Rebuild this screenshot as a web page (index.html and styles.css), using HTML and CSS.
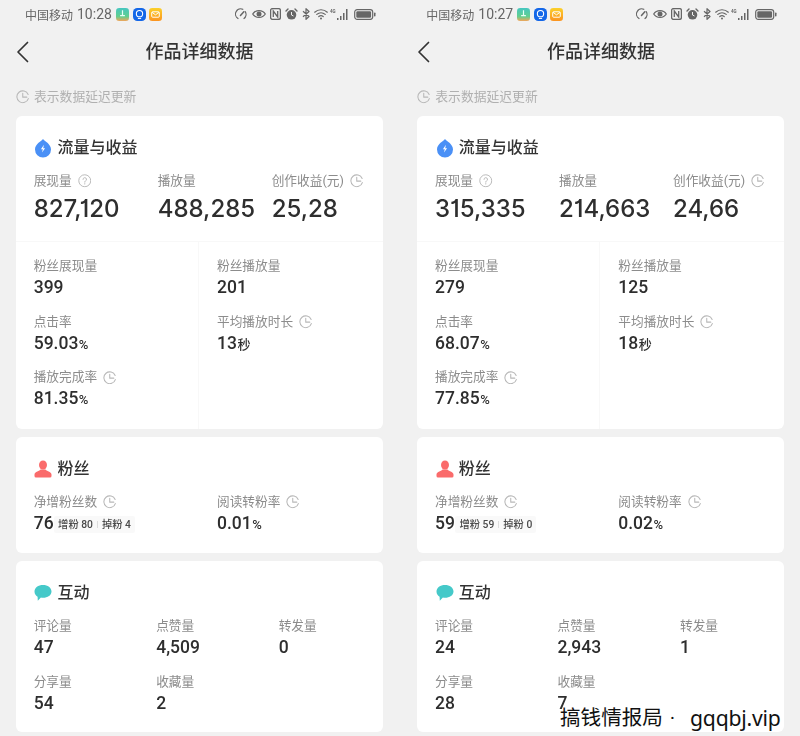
FILE: index.html
```html
<!DOCTYPE html>
<html lang="zh-CN">
<head>
<meta charset="utf-8">
<title>作品详细数据</title>
<link rel="stylesheet" href="styles.css">
</head>
<body>
<svg class="defs" width="0" height="0" aria-hidden="true">
  <defs>
    <linearGradient id="g-app" x1="0" y1="0" x2="0" y2="1"><stop offset="0" stop-color="#45c6c0"/><stop offset=".65" stop-color="#62cf8f"/><stop offset="1" stop-color="#f3a55a"/></linearGradient>
    <linearGradient id="g-mail" x1="0" y1="0" x2="0" y2="1"><stop offset="0" stop-color="#fbd02a"/><stop offset="1" stop-color="#fb9420"/></linearGradient>
  </defs>
  <symbol id="i-clock" viewBox="0 0 14 14"><path d="M12.600 4.600A6.100 6.100 0 1 0 12.800 8.900" fill="none" stroke="currentColor" stroke-width="1.100" stroke-linecap="round"/><path d="M7 3.400V7.400H11.200" fill="none" stroke="currentColor" stroke-width="1.100" stroke-linecap="round" stroke-linejoin="round"/></symbol>
  <symbol id="i-help" viewBox="0 0 14 14"><circle cx="7" cy="7" r="6.200" fill="none" stroke="currentColor" stroke-width="1"/><path d="M5.200 5.600A1.800 1.800 0 1 1 7.600 7.300C7.100 7.600 7 7.900 7 8.500" fill="none" stroke="currentColor" stroke-width="1" stroke-linecap="round"/><circle cx="7" cy="10.200" r=".7" fill="currentColor"/></symbol>
  <symbol id="i-drop" viewBox="0 0 18 20"><path d="M9 1C11 3.400 17 6 17 11.500A8 8 0 0 1 1 11.500C1 6 7 3.400 9 1Z" fill="#4a90f6"/><path d="M9.900 6.800L6.900 11.200H8.800L8 14.600L11.100 10.200H9.200Z" fill="#fff"/></symbol>
  <symbol id="i-person" viewBox="0 0 18 18"><ellipse cx="9" cy="5" rx="4" ry="4.500" fill="#fa6b6b"/><path d="M6.500 9.500H11.500C12 11.200 17.500 11.500 17.500 14.500V16A1.500 1.500 0 0 1 16 17.500H2A1.500 1.500 0 0 1 .5 16V14.500C.5 11.500 6 11.200 6.500 9.500Z" fill="#fa6b6b"/></symbol>
  <symbol id="i-chat" viewBox="0 0 18 17"><path d="M9 .5C13.700 .5 17.500 3.200 17.500 7C17.500 10.800 13.700 13.300 9 13.300C8.300 13.300 7.500 13.200 6.900 13.100L3.800 16.200L3.600 12.300C1.700 11.200 .5 9.300 .5 7C.5 3.200 4.300 .5 9 .5Z" fill="#45c9c9"/></symbol>
  <symbol id="s-green" viewBox="0 0 12 12"><rect width="12" height="12" rx="3" fill="url(#g-app)"/><path d="M6 2V7M3.800 7H8.200" stroke="#e8fff6" stroke-width="1.100"/></symbol>
  <symbol id="s-blue" viewBox="0 0 12 12"><rect width="12" height="12" rx="4" fill="#1467e8"/><circle cx="6" cy="5.200" r="2.900" fill="none" stroke="#fff" stroke-width="1"/><path d="M4.500 9.600H7.500" stroke="#fff" stroke-width="1"/></symbol>
  <symbol id="s-mail" viewBox="0 0 12 12"><rect width="12" height="12" rx="3" fill="url(#g-mail)"/><rect x="2.500" y="3.500" width="7" height="5" rx=".8" fill="none" stroke="#fff" stroke-width=".9"/><path d="M2.800 4L6 6.300L9.200 4" fill="none" stroke="#fff" stroke-width=".9"/></symbol>
  <symbol id="s-gauge" viewBox="0 0 12 12"><path d="M3 10.500A5.200 5.200 0 0 1 7.800 1.300M10.200 3.600A5.200 5.200 0 0 1 9 10.500" fill="none" stroke="currentColor" stroke-width="1.200" stroke-linecap="round"/><path d="M5.500 7.500L8.800 3.800" stroke="currentColor" stroke-width="1.500" stroke-linecap="round"/></symbol>
  <symbol id="s-eye" viewBox="0 0 14 10"><path d="M.7 5C3.500 .5 10.500 .5 13.300 5C10.500 9.500 3.500 9.500 .7 5Z" fill="none" stroke="currentColor" stroke-width="1.200"/><circle cx="7" cy="5" r="2.500" fill="currentColor"/></symbol>
  <symbol id="s-nfc" viewBox="0 0 11 12"><rect x=".6" y=".6" width="9.800" height="10.800" rx="1.800" fill="none" stroke="currentColor" stroke-width="1.300"/><path d="M3.300 9V3L7.700 9V3" fill="none" stroke="currentColor" stroke-width="1.300"/></symbol>
  <symbol id="s-alarm" viewBox="0 0 13 12"><circle cx="6.500" cy="6.800" r="4.800" fill="currentColor"/><path d="M1 3L3 1M12 3L10 1" stroke="currentColor" stroke-width="1.400" stroke-linecap="round"/><path d="M6.500 4V7L8.500 8" fill="none" stroke="#f1f1f1" stroke-width="1"/></symbol>
  <symbol id="s-bt" viewBox="0 0 8 12"><path d="M1 3.200L7 8.500L4 11.300V.7L7 3.500L1 8.800" fill="none" stroke="currentColor" stroke-width="1.200" stroke-linejoin="round"/></symbol>
  <symbol id="s-wifi" viewBox="0 0 14 12"><path d="M.7 4.200C4.200 .9 9.800 .9 13.300 4.200M2.800 6.400C5.200 4.300 8.800 4.300 11.200 6.400M4.800 8.500C6 7.500 8 7.500 9.200 8.500" fill="none" stroke="currentColor" stroke-width="1.200" stroke-linecap="round"/><circle cx="7" cy="10.500" r="1" fill="currentColor"/></symbol>
  <symbol id="s-signal" viewBox="0 0 19 12"><text x="0" y="4.500" class="tiny">4G</text><path d="M7 10H8.500V12H7ZM10 8H11.500V12H10ZM13 5H14.500V12H13ZM16 1H17.500V12H16Z" fill="currentColor"/></symbol>
  <symbol id="s-bat" viewBox="0 0 22 11"><rect x=".7" y=".7" width="18" height="9.600" rx="2.500" fill="none" stroke="currentColor" stroke-width="1.200"/><rect x="2.300" y="2.300" width="14.800" height="6.400" rx="1.200" fill="currentColor"/><rect x="20" y="3.500" width="1.500" height="4" rx=".7" fill="currentColor"/></symbol>
</svg>

<main class="phones">
  <section class="phone">
    <header class="status">
      <div class="status-left"><span class="carrier">中国移动</span><span class="time">10:28</span>
        <svg class="app"><use href="#s-green"/></svg><svg class="app"><use href="#s-blue"/></svg><svg class="app"><use href="#s-mail"/></svg></div>
      <div class="status-right">
        <svg class="sg"><use href="#s-gauge"/></svg><svg class="se"><use href="#s-eye"/></svg><svg class="sn"><use href="#s-nfc"/></svg><svg class="sa"><use href="#s-alarm"/></svg><svg class="sb"><use href="#s-bt"/></svg><svg class="sw"><use href="#s-wifi"/></svg><svg class="ss"><use href="#s-signal"/></svg><svg class="sc"><use href="#s-bat"/></svg>
      </div>
    </header>
    <nav class="nav">
      <svg class="back" viewBox="0 0 12 22"><path d="M11 1.500L1.500 11L11 20.500" fill="none" stroke="currentColor" stroke-width="1.700" stroke-linecap="round" stroke-linejoin="round"/></svg>
      <h1 class="nav-title">作品详细数据</h1>
    </nav>
    <p class="note"><svg class="ic"><use href="#i-clock"/></svg>表示数据延迟更新</p>

    <section class="card">
      <h2 class="card-title"><svg class="ti ti-drop"><use href="#i-drop"/></svg>流量与收益</h2>
      <div class="headline">
        <div><div class="label">展现量<svg class="ic"><use href="#i-help"/></svg></div><div class="big">827,120</div></div>
        <div><div class="label">播放量</div><div class="big">488,285</div></div>
        <div><div class="label">创作收益(元)<svg class="ic"><use href="#i-clock"/></svg></div><div class="big">25,28</div></div>
      </div>
      <div class="split">
        <div class="stack">
          <div><div class="label">粉丝展现量</div><div class="value">399</div></div>
          <div><div class="label">点击率</div><div class="value">59.03<small>%</small></div></div>
          <div><div class="label">播放完成率<svg class="ic"><use href="#i-clock"/></svg></div><div class="value">81.35<small>%</small></div></div>
        </div>
        <div class="stack">
          <div><div class="label">粉丝播放量</div><div class="value">201</div></div>
          <div><div class="label">平均播放时长<svg class="ic"><use href="#i-clock"/></svg></div><div class="value">13<small>秒</small></div></div>
        </div>
      </div>
    </section>

    <section class="card">
      <h2 class="card-title"><svg class="ti"><use href="#i-person"/></svg>粉丝</h2>
      <div class="two">
        <div><div class="label">净增粉丝数<svg class="ic"><use href="#i-clock"/></svg></div><div class="value">76<span class="chip"><span>增粉&nbsp;80</span><i></i><span>掉粉&nbsp;4</span></span></div></div>
        <div><div class="label">阅读转粉率<svg class="ic"><use href="#i-clock"/></svg></div><div class="value">0.01<small>%</small></div></div>
      </div>
    </section>

    <section class="card">
      <h2 class="card-title"><svg class="ti"><use href="#i-chat"/></svg>互动</h2>
      <div class="three">
        <div><div class="label">评论量</div><div class="value">47</div></div>
        <div><div class="label">点赞量</div><div class="value">4,509</div></div>
        <div><div class="label">转发量</div><div class="value">0</div></div>
        <div><div class="label">分享量</div><div class="value">54</div></div>
        <div><div class="label">收藏量</div><div class="value">2</div></div>
      </div>
    </section>
  </section>

  <section class="phone">
    <header class="status">
      <div class="status-left"><span class="carrier">中国移动</span><span class="time">10:27</span>
        <svg class="app"><use href="#s-green"/></svg><svg class="app"><use href="#s-blue"/></svg><svg class="app"><use href="#s-mail"/></svg></div>
      <div class="status-right">
        <svg class="sg"><use href="#s-gauge"/></svg><svg class="se"><use href="#s-eye"/></svg><svg class="sn"><use href="#s-nfc"/></svg><svg class="sa"><use href="#s-alarm"/></svg><svg class="sb"><use href="#s-bt"/></svg><svg class="sw"><use href="#s-wifi"/></svg><svg class="ss"><use href="#s-signal"/></svg><svg class="sc"><use href="#s-bat"/></svg>
      </div>
    </header>
    <nav class="nav">
      <svg class="back" viewBox="0 0 12 22"><path d="M11 1.500L1.500 11L11 20.500" fill="none" stroke="currentColor" stroke-width="1.700" stroke-linecap="round" stroke-linejoin="round"/></svg>
      <h1 class="nav-title">作品详细数据</h1>
    </nav>
    <p class="note"><svg class="ic"><use href="#i-clock"/></svg>表示数据延迟更新</p>

    <section class="card">
      <h2 class="card-title"><svg class="ti ti-drop"><use href="#i-drop"/></svg>流量与收益</h2>
      <div class="headline">
        <div><div class="label">展现量<svg class="ic"><use href="#i-help"/></svg></div><div class="big">315,335</div></div>
        <div><div class="label">播放量</div><div class="big">214,663</div></div>
        <div><div class="label">创作收益(元)<svg class="ic"><use href="#i-clock"/></svg></div><div class="big">24,66</div></div>
      </div>
      <div class="split">
        <div class="stack">
          <div><div class="label">粉丝展现量</div><div class="value">279</div></div>
          <div><div class="label">点击率</div><div class="value">68.07<small>%</small></div></div>
          <div><div class="label">播放完成率<svg class="ic"><use href="#i-clock"/></svg></div><div class="value">77.85<small>%</small></div></div>
        </div>
        <div class="stack">
          <div><div class="label">粉丝播放量</div><div class="value">125</div></div>
          <div><div class="label">平均播放时长<svg class="ic"><use href="#i-clock"/></svg></div><div class="value">18<small>秒</small></div></div>
        </div>
      </div>
    </section>

    <section class="card">
      <h2 class="card-title"><svg class="ti"><use href="#i-person"/></svg>粉丝</h2>
      <div class="two">
        <div><div class="label">净增粉丝数<svg class="ic"><use href="#i-clock"/></svg></div><div class="value">59<span class="chip"><span>增粉&nbsp;59</span><i></i><span>掉粉&nbsp;0</span></span></div></div>
        <div><div class="label">阅读转粉率<svg class="ic"><use href="#i-clock"/></svg></div><div class="value">0.02<small>%</small></div></div>
      </div>
    </section>

    <section class="card">
      <h2 class="card-title"><svg class="ti"><use href="#i-chat"/></svg>互动</h2>
      <div class="three">
        <div><div class="label">评论量</div><div class="value">24</div></div>
        <div><div class="label">点赞量</div><div class="value">2,943</div></div>
        <div><div class="label">转发量</div><div class="value">1</div></div>
        <div><div class="label">分享量</div><div class="value">28</div></div>
        <div><div class="label">收藏量</div><div class="value">7</div></div>
      </div>
    </section>
  </section>
</main>
<div class="watermark"><span>搞钱情报局</span><span class="dot">·</span><span class="wm-url">gqqbj.vip</span></div>
</body>
</html>
```

FILE: styles.css
```css
* { box-sizing: border-box; }
html, body { margin: 0; height: 736px; overflow: hidden; }
body {
  position: relative;
  background: #f1f1f1;
  font-family: Roboto, "Noto Sans CJK SC", sans-serif;
  color: #2e2e2e;
}
.defs { position: absolute; }
.tiny { font: 700 4.500px Roboto, sans-serif; fill: currentColor; }

.phones { display: flex; gap: 1.300px; width: 800px; filter: blur(.45px); }
.phone { flex: 0 0 400px; min-width: 0; padding: 0 17px 0 16px; }
.phone + .phone { flex: 0 0 398.700px; padding: 0 15.500px 0 16px; }

.status {
  height: 28px;
  display: flex;
  align-items: center;
  justify-content: space-between;
  padding: 0 7px 0 9px;
  color: #666;
}
.status-left { display: flex; align-items: center; }
.carrier { font-size: 12px; width: 52px; }
.time { font-size: 14px; width: 39px; }
.app { width: 13px; height: 13px; margin-right: 3.500px; }
.status-right { display: flex; align-items: center; gap: 4px; }
.sg { width: 12px; height: 12px; margin-right: 1px; }
.se { width: 14px; height: 10px; }
.sn { width: 11px; height: 12px; }
.sa { width: 13px; height: 12px; }
.sb { width: 8px; height: 12px; }
.sw { width: 14px; height: 12px; }
.ss { width: 19px; height: 12px; margin-left: -2px; }
.sc { width: 22px; height: 11px; margin-left: 1px; }

.nav { position: relative; height: 48px; display: flex; align-items: center; justify-content: center; }
.back { position: absolute; left: 0; top: 13px; width: 13px; height: 22px; color: #333; }
.nav-title { margin: 0; font-size: 18px; line-height: 24px; font-weight: 500; color: #333; }

.note {
  margin: 0;
  padding: 10px 0 8.300px;
  display: flex;
  align-items: center;
  gap: 4.500px;
  font-size: 12.800px;
  line-height: 22px;
  color: #b0b0b0;
}
.ic { width: 13.500px; height: 13.500px; color: #b8b8b8; flex: none; }

.card { background: #fff; border-radius: 6px; padding: 20.700px 17.700px 19.300px; margin-bottom: 8.500px; }
.card-title {
  margin: 0 0 13px;
  display: flex;
  align-items: center;
  gap: 5px;
  font-size: 16px;
  line-height: 22px;
  font-weight: 500;
  color: #333;
}
.ti { width: 18px; height: 18px; flex: none; margin-left: .800px; }
.ti-drop { height: 20px; }

.label {
  display: flex;
  align-items: center;
  gap: 6px;
  font-size: 12.700px;
  line-height: 18px;
  color: #8c8c8c;
}
.value { font-size: 17.500px; line-height: 24px; font-weight: 500; color: #2e2e2e; display: flex; align-items: baseline; height: 24px; }
.value small { font-size: 13px; line-height: 1; margin-left: .500px; }
.big { font-family: Inter, Roboto, sans-serif; font-feature-settings: "cv01"; font-size: 24px; line-height: 30px; font-weight: 500; margin-top: 4px; color: #2e2e2e; }

.headline {
  display: grid;
  grid-template-columns: 124px 114px 1fr;
  margin: 0 -17.700px;
  padding: 0 17.700px 17px;
  border-bottom: 1px solid #f8f8f8;
  white-space: nowrap;
}
.split { display: grid; grid-template-columns: 183px 1fr; margin: 0 -17.700px -19.300px; }
.stack { display: flex; flex-direction: column; gap: 13.500px; padding: 15.500px 0 18.500px 17.700px; }
.stack + .stack { padding-left: 18px; }
.stack:first-child { border-right: 1px solid #f8f8f8; }

.two { display: grid; grid-template-columns: 183.300px 1fr; margin-bottom: -1.500px; }
.three { display: grid; grid-template-columns: 122.500px 122.500px 1fr; row-gap: 13.500px; margin-bottom: -1.500px; }

.chip {
  display: inline-flex;
  align-items: center;
  align-self: center;
  gap: 4px;
  height: 17px;
  margin: 2px 0 0;
  padding: 0 4px 0 4.500px;
  background: #f9f9f9;
  border-radius: 2px;
  font-size: 10.300px;
  line-height: 17px;
  font-weight: 500;
  color: #4a4a4a;
  white-space: nowrap;
}
.chip i { width: 1px; height: 7px; background: #ddd; }

.watermark {
  position: absolute;
  left: 560px;
  top: 703px;
  display: flex;
  align-items: center;
  font-size: 20.600px;
  line-height: 30px;
  color: #111;
  white-space: nowrap;
}
.dot { width: 27px; text-align: center; padding-right: 8px; }
.wm-url { font-size: 21.200px; font-family: "Noto Sans", sans-serif; letter-spacing: -.2px; }
```
